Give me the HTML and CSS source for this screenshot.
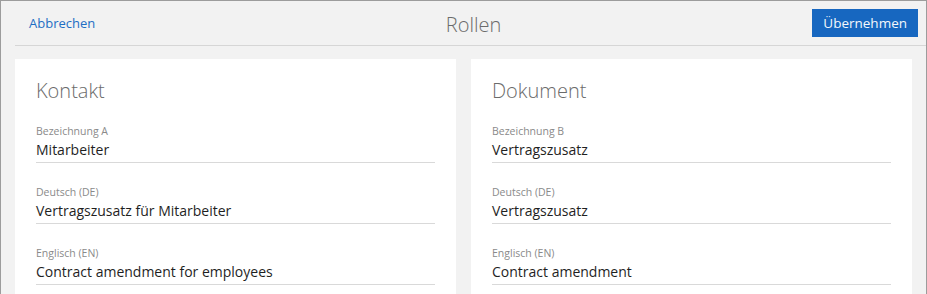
FILE: index.html
```html
<!DOCTYPE html>
<html>
<head>
	<meta charset="utf-8">
	<meta name="viewport" content="width=device-width">
	<title>Rollen</title>
	<link rel="stylesheet" href="styles.css">
</head>
<body>
	<div class="window">
		<header class="topbar">
			<a class="cancel" href="#">Abbrechen</a>
			<h1 class="title">Rollen</h1>
			<div class="actions">
				<button class="apply">Übernehmen</button>
			</div>
		</header>

		<main class="cards">
			<section class="card">
				<h2 class="card-title">Kontakt</h2>
				<div class="field">
					<label>Bezeichnung A</label>
					<div class="value">Mitarbeiter</div>
				</div>
				<div class="field">
					<label>Deutsch (DE)</label>
					<div class="value">Vertragszusatz für Mitarbeiter</div>
				</div>
				<div class="field">
					<label>Englisch (EN)</label>
					<div class="value">Contract amendment for employees</div>
				</div>
			</section>

			<section class="card">
				<h2 class="card-title">Dokument</h2>
				<div class="field">
					<label>Bezeichnung B</label>
					<div class="value">Vertragszusatz</div>
				</div>
				<div class="field">
					<label>Deutsch (DE)</label>
					<div class="value">Vertragszusatz</div>
				</div>
				<div class="field">
					<label>Englisch (EN)</label>
					<div class="value">Contract amendment</div>
				</div>
			</section>
		</main>
	</div>
</body>
</html>
```

FILE: styles.css
```css
html, body {
	margin: 0;
	padding: 0;
	height: 100%;
	overflow: hidden;
}

body {
	font-family: "Open Sans", "Noto Sans", sans-serif;
	background-color: #f2f2f2;
}

.window {
	box-sizing: border-box;
	height: 100%;
	border: solid 1px #9c9c9c;
	border-bottom: none;
	background-color: #f2f2f2;
	overflow: hidden;
}

.topbar {
	display: grid;
	grid-template-columns: 1fr auto 1fr;
	align-items: center;
	height: 44px;
	margin-left: 14px;
	padding: 0 8px 0 14px;
	border-bottom: solid 1px #d6d6d6;
}

.cancel {
	font-size: 13px;
	color: #1e6ec4;
	text-decoration: none;
}

.title {
	margin: 0;
	padding-top: 3px;
	font-size: 20px;
	font-weight: 300;
	color: #6b6b6b;
}

.actions {
	text-align: right;
}

.apply {
	height: 28px;
	padding: 0 11px;
	border: none;
	background-color: #1767c0;
	color: #f4f8fc;
	font-family: inherit;
	font-size: 13.5px;
}

.cards {
	display: grid;
	grid-template-columns: 1fr 1fr;
	gap: 15px;
	padding: 13px 14px 0;
}

.card {
	background-color: #fff;
	padding: 18px 21px 24px;
}

.card-title {
	margin: 0 0 19px;
	font-size: 20px;
	line-height: 28px;
	font-weight: 300;
	color: #6b6b6b;
}

.field + .field {
	margin-top: 22px;
}

.field label {
	display: block;
	font-size: 10.5px;
	line-height: 14px;
	margin-bottom: 2px;
	color: #8a8a8a;
}

.field .value {
	font-size: 14px;
	line-height: 20px;
	padding-bottom: 2px;
	border-bottom: solid 1px #d9d9d9;
	color: #1f1f1f;
}
```
